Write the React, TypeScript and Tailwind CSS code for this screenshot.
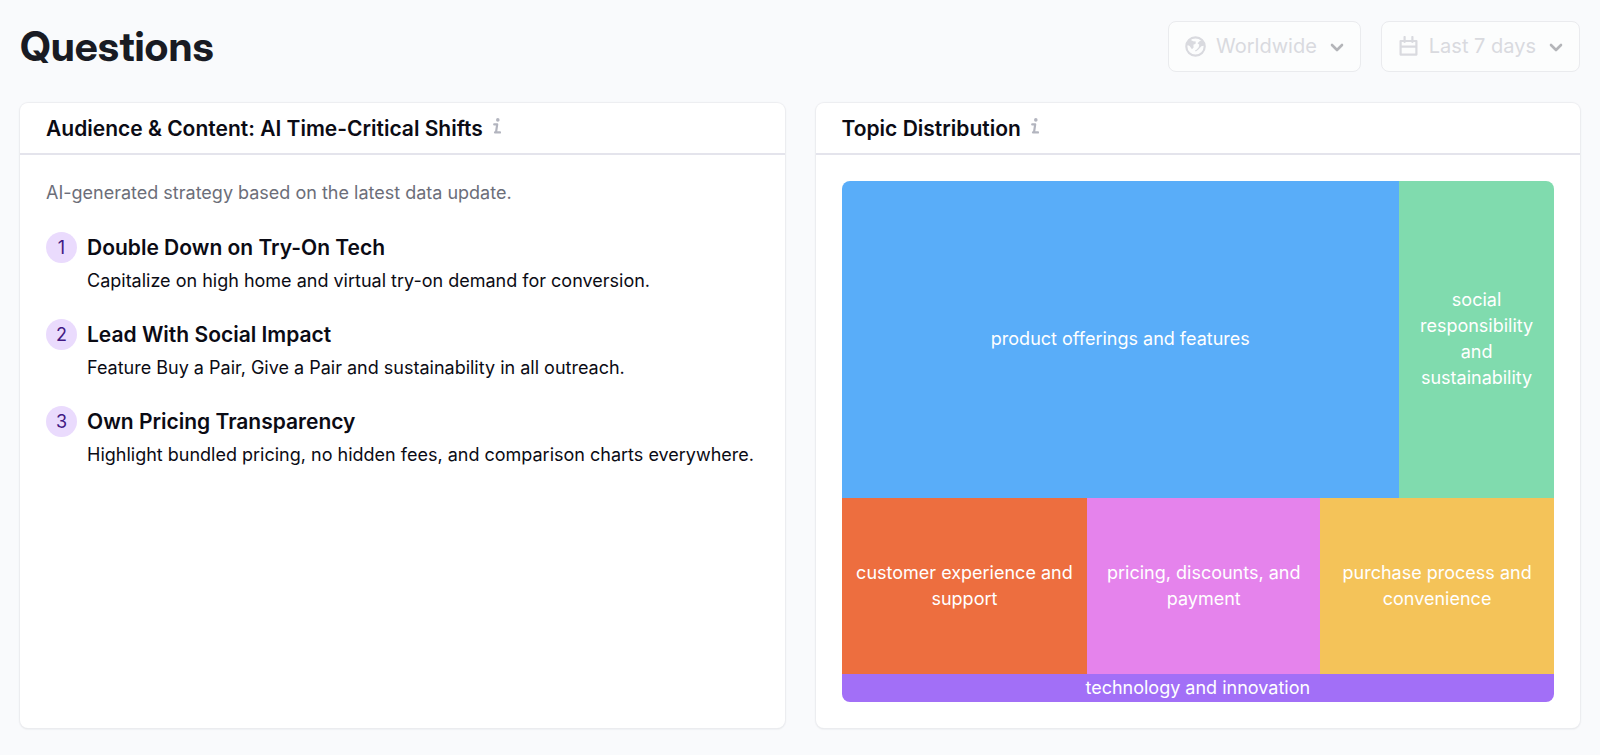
import React from "react";

type Insight = { title: string; body: string };

const insights: Insight[] = [
  { title: "Double Down on Try-On Tech", body: "Capitalize on high home and virtual try-on demand for conversion." },
  { title: "Lead With Social Impact", body: "Feature Buy a Pair, Give a Pair and sustainability in all outreach." },
  { title: "Own Pricing Transparency", body: "Highlight bundled pricing, no hidden fees, and comparison charts everywhere." },
];

function GlobeIcon() {
  return (
    <svg viewBox="0 0 21 21" className="size-[21px] shrink-0" fill="none" aria-hidden="true">
      <circle cx="10.5" cy="10.5" r="9.2" stroke="currentColor" strokeWidth="2.2" />
      <path d="M2 6.5 5 3.4l3.2 1.8 2.6.4-.2 2.2-2.2 1 .2 2.6-1.6 1.8L4.6 10 2 8.8Z" fill="currentColor" />
      <path d="m19.5 8-2-4-3 1.2-2 2 1.8 1.6-.6 2.4-2 2.2-1.8 1.4 1 .8 2.8-2.4 2.6-3 3.2-.6Z" fill="currentColor" />
    </svg>
  );
}

function CalendarIcon() {
  return (
    <svg viewBox="0 0 21 21" className="size-[21px] shrink-0" fill="none" aria-hidden="true">
      <path
        d="M2.6 5h15.8v13.6H2.6ZM2.6 10.6h15.8M6.6 1v5M14.4 1v5"
        stroke="currentColor"
        strokeWidth="2.2"
        strokeLinecap="round"
        strokeLinejoin="round"
      />
    </svg>
  );
}

function ChevronIcon() {
  return (
    <svg viewBox="0 0 14 9" className="mt-[3px] h-[9px] w-[14px] shrink-0 text-[#b4b5b9]" fill="none" aria-hidden="true">
      <path d="m2 2 5 5 5-5" stroke="currentColor" strokeWidth="2.6" strokeLinecap="round" strokeLinejoin="round" />
    </svg>
  );
}

function InfoIcon() {
  return (
    <svg viewBox="0 0 8 16" className="h-4 w-2 shrink-0" fill="none" aria-hidden="true">
      <circle cx="4.8" cy="1.9" r="1.8" fill="currentColor" />
      <path d="M1.2 6.4h3L3 14.4M2 14.4h5" stroke="currentColor" strokeWidth="2.2" strokeLinecap="round" strokeLinejoin="round" />
    </svg>
  );
}

function FilterButton({ icon, label }: { icon: React.ReactNode; label: string }) {
  return (
    <button
      type="button"
      disabled
      className="flex h-[51px] items-center rounded-lg border border-[#eaebee] bg-[#fcfdfd] px-4 pb-px text-xl text-[#d9dadf]"
    >
      {icon}
      <span className="ml-[10px] mr-[13px]">{label}</span>
      <ChevronIcon />
    </button>
  );
}

function Card({ title, children }: { title: string; children: React.ReactNode }) {
  return (
    <section className="flex min-w-0 flex-1 flex-col rounded-lg bg-white shadow-[0_0_1px_1px_#ecedf0,0_1px_2px_0_#dcdde0]">
      <header className="flex h-[52px] shrink-0 items-center gap-[10px] border-b-2 border-[#e4e4ec] px-[26px]">
        <h2 className="pt-px text-[21px] font-semibold">{title}</h2>
        <button type="button" aria-label={"About " + title} className="pb-1 text-[#b3b5bf]">
          <InfoIcon />
        </button>
      </header>
      {children}
    </section>
  );
}

function Tile({ label, className }: { label: string; className: string }) {
  return (
    <div className={"flex min-w-0 items-center justify-center overflow-hidden text-center text-lg leading-[26px] text-white " + className}>
      <span className="px-3">{label}</span>
    </div>
  );
}

export default function App() {
  return (
    <main className="flex min-h-screen flex-col bg-[#f9fafc] px-5 pb-[27px] pt-[21px] font-[Inter,sans-serif] text-[#0b0b14]">
      <div className="flex h-[51px] items-center justify-between">
        <h1 className="font-['Inter_Display',Inter,sans-serif] text-[41px] font-bold leading-[51px] text-[#191b23]">Questions</h1>
        <div className="flex gap-5">
          <FilterButton icon={<GlobeIcon />} label="Worldwide" />
          <FilterButton icon={<CalendarIcon />} label="Last 7 days" />
        </div>
      </div>

      <div className="mt-[31px] flex flex-1 gap-[31px]">
        <Card title="Audience & Content: AI Time-Critical Shifts">
          <div className="px-[26px] pt-[25px]">
            <p className="text-lg leading-[26px] text-[#6c6e79]">AI-generated strategy based on the latest data update.</p>
            <ol className="mt-[26px] flex flex-col gap-[25px]">
              {insights.map((item, i) => (
                <li key={item.title} className="flex gap-[10px]">
                  <span className="flex size-[31px] shrink-0 items-center justify-center rounded-full bg-[#eadbfd] text-lg text-[#421983]">
                    {i + 1}
                  </span>
                  <div>
                    <h3 className="text-[21px] font-semibold leading-[31px]">{item.title}</h3>
                    <p className="mt-[5px] text-lg leading-[26px]">{item.body}</p>
                  </div>
                </li>
              ))}
            </ol>
          </div>
        </Card>

        <Card title="Topic Distribution">
          <div className="flex flex-1 p-[26px]">
            <div className="flex flex-1 flex-col overflow-hidden rounded-lg">
              <div className="flex grow-[318] basis-0">
                <Tile label="product offerings and features" className="grow-[558] basis-0 bg-[#59adf9]" />
                <Tile label="social responsibility and sustainability" className="grow-[155] basis-0 bg-[#80dbae]" />
              </div>
              <div className="flex grow-[177] basis-0">
                <Tile label="customer experience and support" className="grow-[246] basis-0 bg-[#ed6e3f]" />
                <Tile label="pricing, discounts, and payment" className="grow-[233] basis-0 bg-[#e583ec]" />
                <Tile label="purchase process and convenience" className="grow-[234] basis-0 bg-[#f4c359]" />
              </div>
              <Tile label="technology and innovation" className="grow-[28] basis-0 bg-[#a26ff7]" />
            </div>
          </div>
        </Card>
      </div>
    </main>
  );
}
